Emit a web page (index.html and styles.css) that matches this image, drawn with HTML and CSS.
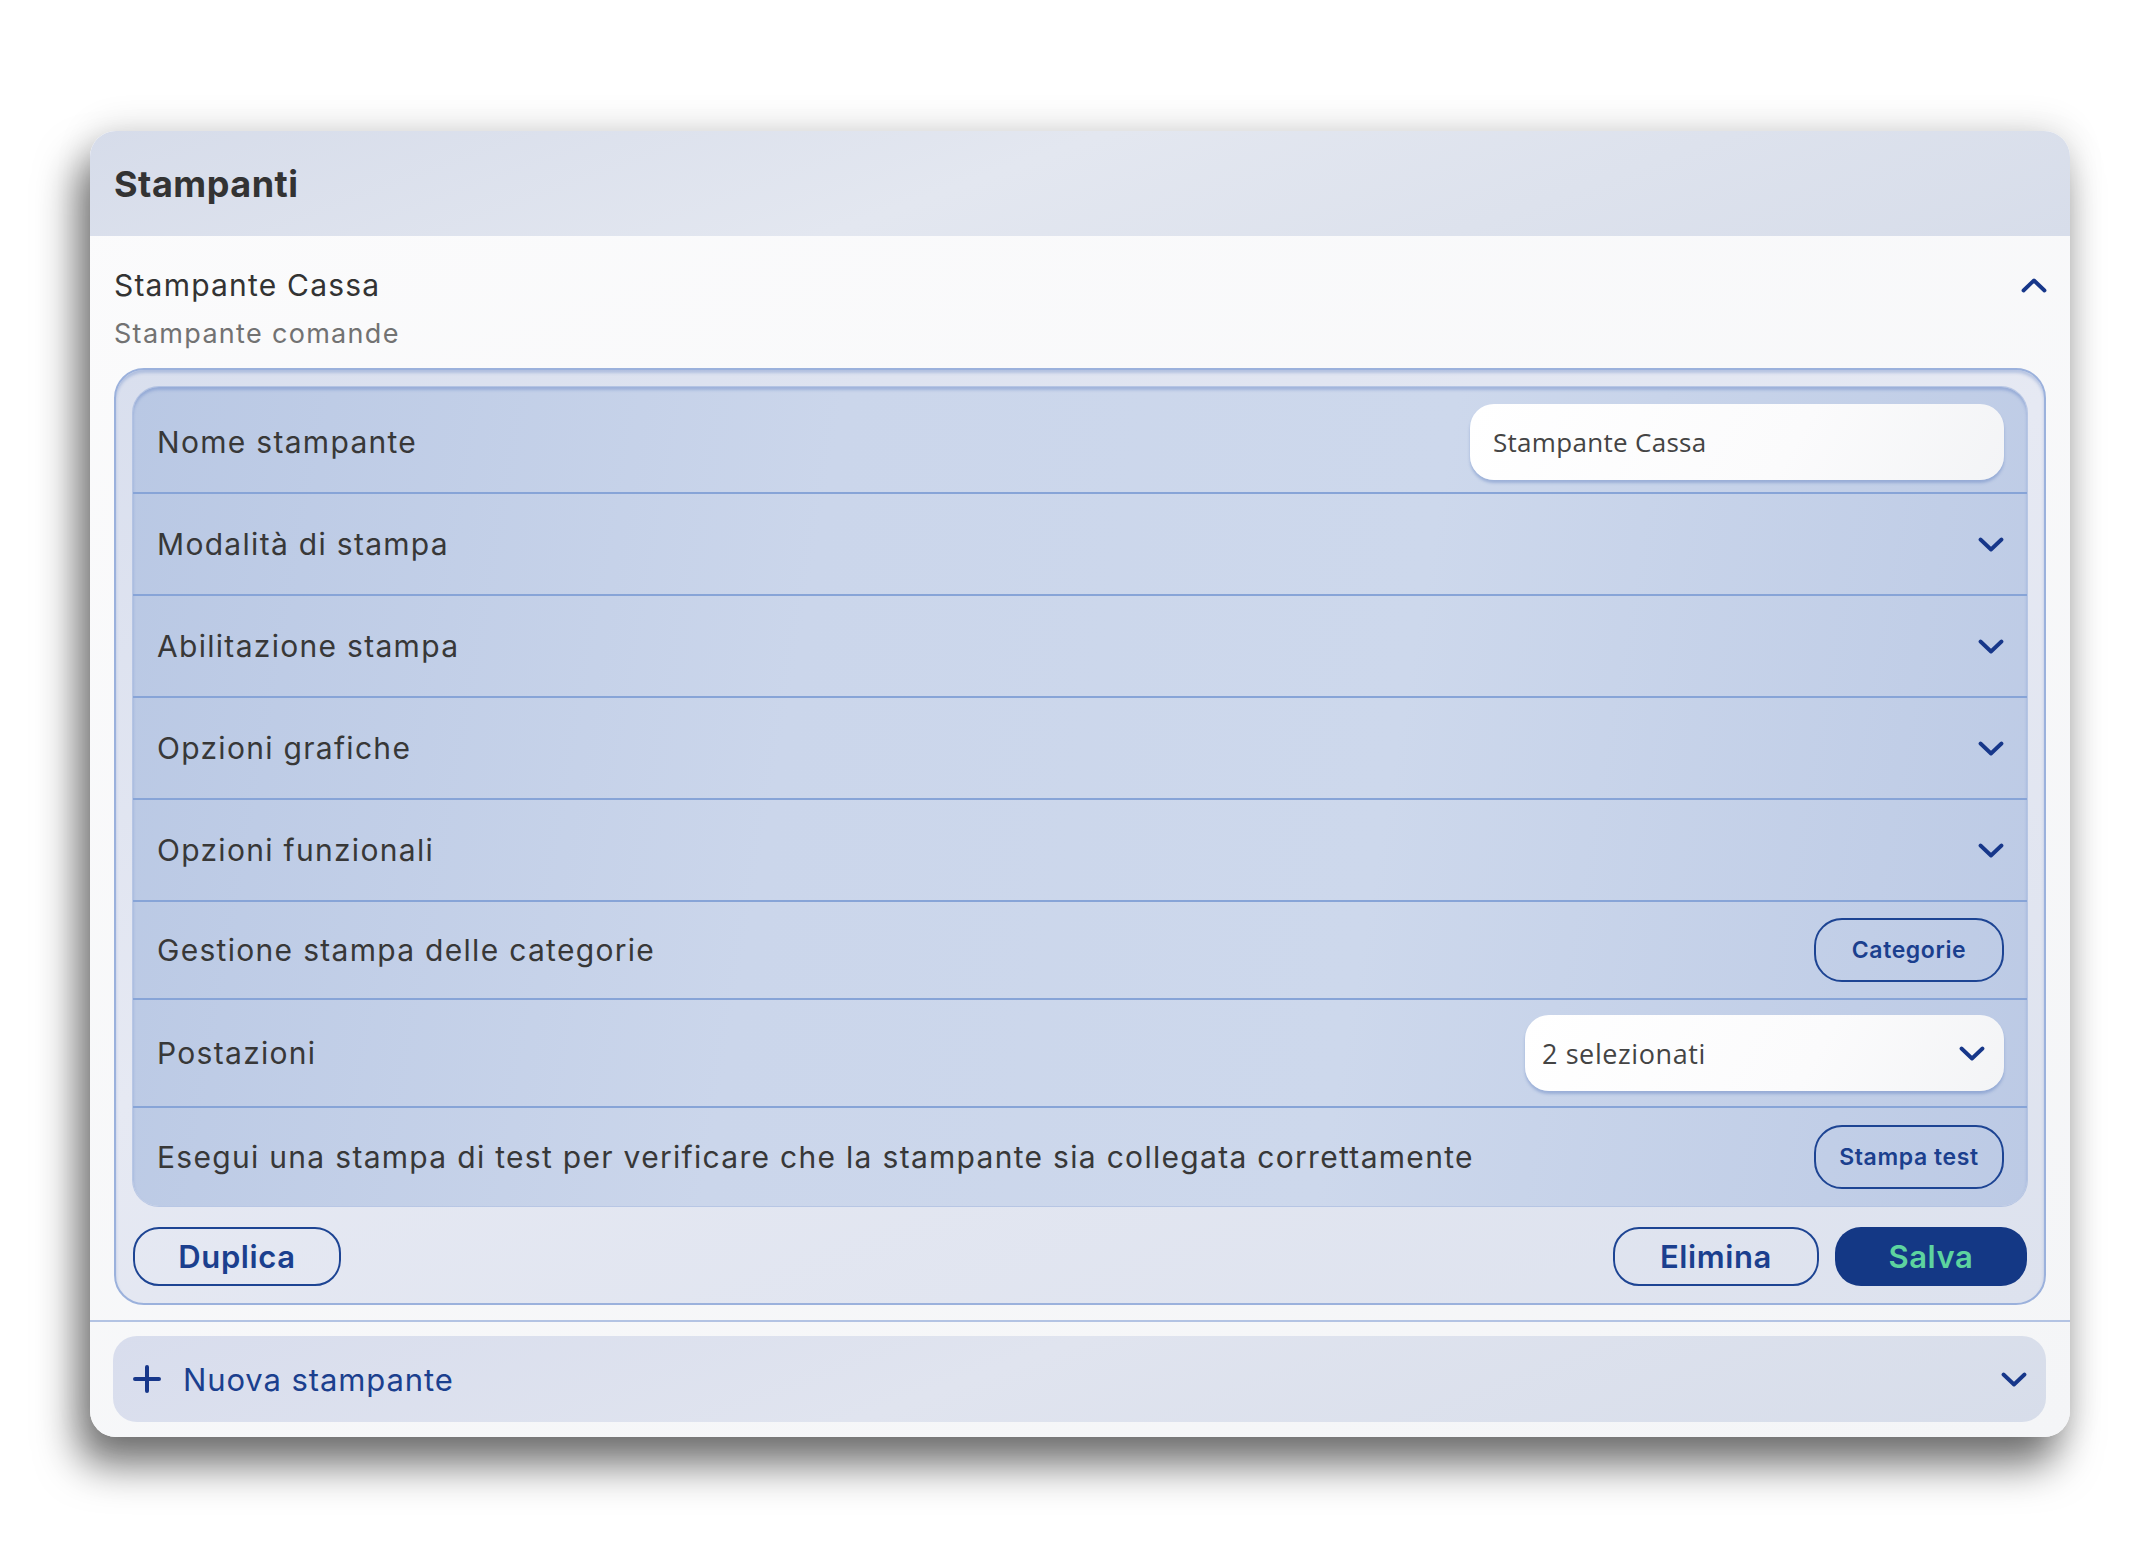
FILE: index.html
```html
<!DOCTYPE html>
<html lang="it">
<head>
<meta charset="utf-8">
<title>Stampanti</title>
<link rel="stylesheet" href="styles.css">
</head>
<body>
<div class="card">
  <div class="card-header"><h1 class="card-title">Stampanti</h1></div>
  <div class="printer">
    <div class="printer-head">
      <div class="printer-info">
        <div class="printer-name">Stampante Cassa</div>
        <div class="printer-type">Stampante comande</div>
      </div>
      <svg class="chev chev-up" width="26" height="15" viewBox="0 0 26 15"><path d="M2.5 12.5 L13 2.5 L23.5 12.5" /></svg>
    </div>
    <div class="panel">
      <div class="rows">
        <div class="row row-input">
          <span class="label">Nome stampante</span>
          <div class="field">Stampante Cassa</div>
        </div>
        <div class="row">
          <span class="label">Modalità di stampa</span>
          <svg class="chev" width="26" height="15" viewBox="0 0 26 15"><path d="M2.5 2.5 L13 12.5 L23.5 2.5" /></svg>
        </div>
        <div class="row">
          <span class="label">Abilitazione stampa</span>
          <svg class="chev" width="26" height="15" viewBox="0 0 26 15"><path d="M2.5 2.5 L13 12.5 L23.5 2.5" /></svg>
        </div>
        <div class="row">
          <span class="label">Opzioni grafiche</span>
          <svg class="chev" width="26" height="15" viewBox="0 0 26 15"><path d="M2.5 2.5 L13 12.5 L23.5 2.5" /></svg>
        </div>
        <div class="row">
          <span class="label">Opzioni funzionali</span>
          <svg class="chev" width="26" height="15" viewBox="0 0 26 15"><path d="M2.5 2.5 L13 12.5 L23.5 2.5" /></svg>
        </div>
        <div class="row row-btn">
          <span class="label">Gestione stampa delle categorie</span>
          <button class="btn-small">Categorie</button>
        </div>
        <div class="row row-select">
          <span class="label">Postazioni</span>
          <div class="field select">
            <span>2 selezionati</span>
            <svg class="chev" width="26" height="15" viewBox="0 0 26 15"><path d="M2.5 2.5 L13 12.5 L23.5 2.5" /></svg>
          </div>
        </div>
        <div class="row row-btn row-last">
          <span class="label">Esegui una stampa di test per verificare che la stampante sia collegata correttamente</span>
          <button class="btn-small">Stampa test</button>
        </div>
      </div>
      <div class="actions">
        <button class="btn btn-outline btn-dup">Duplica</button>
        <div class="actions-right">
          <button class="btn btn-outline btn-del">Elimina</button>
          <button class="btn btn-primary">Salva</button>
        </div>
      </div>
    </div>
  </div>
  <div class="add-section">
    <div class="add-panel">
      <svg class="plus" width="28" height="28" viewBox="0 0 28 28"><path d="M14 2 V26 M2 14 H26" /></svg>
      <span class="add-label">Nuova stampante</span>
      <svg class="chev chev-add" width="26" height="15" viewBox="0 0 26 15"><path d="M2.5 2.5 L13 12.5 L23.5 2.5" /></svg>
    </div>
  </div>
</div>
</body>
</html>
```

FILE: styles.css
```css
* { box-sizing: border-box; }

html, body {
  margin: 0;
  padding: 0;
  background: #ffffff;
}

body {
  min-height: 1554px;
  padding: 131px 0 0 90px;
  font-family: "Inter", "Liberation Sans", sans-serif;
  color: #363636;
}

.card {
  width: 1980px;
  border-radius: 26px;
  background: linear-gradient(160deg, #fbfbfc 0%, #f4f5f7 100%);
  box-shadow: -12px 28px 42px rgba(0, 0, 0, 0.55), 0 -4px 36px rgba(0, 0, 0, 0.12);
  overflow: hidden;
}

.card-header {
  height: 105px;
  display: flex;
  align-items: center;
  padding-left: 24px;
  background: linear-gradient(160deg, #d6dcea 0%, #e3e7f0 45%, #d7ddea 100%);
}

.card-title {
  margin: 0;
  font-size: 36px;
  font-weight: 700;
  letter-spacing: 0.5px;
  color: #333333;
}

.printer {
  padding: 30px 24px 15px 24px;
  border-bottom: 2px solid #b3c3e3;
}

.printer-head {
  display: flex;
  justify-content: space-between;
  align-items: flex-start;
}

.printer-name {
  font-size: 30px;
  line-height: 38px;
  letter-spacing: 1.2px;
  color: #333333;
}

.printer-type {
  margin-top: 13px;
  font-size: 27px;
  line-height: 34px;
  letter-spacing: 1.3px;
  color: #727272;
}

.chev {
  display: block;
  fill: none;
  stroke: #17378a;
  stroke-width: 3.8;
  stroke-linecap: round;
  stroke-linejoin: round;
  flex: none;
}

.chev-up {
  margin-top: 12px;
  margin-right: -1px;
}

.panel {
  margin-top: 17px;
  border: 2px solid #9bb1dc;
  border-radius: 30px;
  padding: 17px;
  background: linear-gradient(160deg, #d9dfee 0%, #e6e9f3 45%, #dde2ee 100%);
  box-shadow: inset 0 3px 3px rgba(80, 115, 190, 0.30);
}

.rows {
  border-radius: 26px;
  background: linear-gradient(100deg, #b9c8e4 0%, #cbd6eb 35%, #cdd8ec 65%, #bccae5 100%);
  box-shadow: inset 0 3px 3px rgba(80, 115, 190, 0.35), 0 0 0 1px rgba(140, 165, 215, 0.5);
}

.row {
  height: 102px;
  display: flex;
  align-items: center;
  justify-content: space-between;
  padding: 0 23px 0 24px;
  border-bottom: 2px solid #87a4d7;
}

.row-input { height: 107px; padding-top: 4px; }
.row-btn { height: 98px; }
.row-select { height: 108px; }
.row-last { border-bottom: none; }

.label {
  font-size: 30px;
  letter-spacing: 1.3px;
  color: #383838;
}

.field {
  height: 76px;
  border-radius: 24px;
  background: linear-gradient(120deg, #ffffff 0%, #fbfbfc 60%, #f3f4f6 100%);
  box-shadow: 0 3px 3px rgba(70, 105, 180, 0.35);
  font-family: "Open Sans", "Liberation Sans", sans-serif;
  font-size: 26px;
  letter-spacing: 0.3px;
  color: #444444;
  display: flex;
  align-items: center;
}

.row-input .field {
  width: 534px;
  padding-left: 23px;
}

.select {
  width: 479px;
  padding: 0 19px 0 17px;
  justify-content: space-between;
  font-size: 27px;
  letter-spacing: 0.6px;
}

.btn-small {
  width: 190px;
  height: 64px;
  border: 2px solid #1d4493;
  border-radius: 28px;
  background: transparent;
  font-family: "Inter", "Liberation Sans", sans-serif;
  font-size: 23px;
  font-weight: 600;
  letter-spacing: 0.6px;
  color: #1b3f8e;
  padding: 0;
}

.actions {
  margin-top: 21px;
  display: flex;
  justify-content: space-between;
  align-items: center;
}

.actions-right {
  display: flex;
  gap: 16px;
}

.btn {
  height: 59px;
  border-radius: 26px;
  font-family: "Inter", "Liberation Sans", sans-serif;
  font-size: 31px;
  font-weight: 600;
  letter-spacing: 0.6px;
  padding: 0;
}

.btn-outline {
  border: 2px solid #1d4493;
  background: transparent;
  color: #1b3f8e;
}

.btn-dup { width: 208px; }
.btn-del { width: 206px; }

.btn-primary {
  width: 192px;
  border: none;
  background: #143885;
  color: #5dd49f;
}

.add-section {
  padding: 14px 24px 15px 23px;
}

.add-panel {
  height: 86px;
  border-radius: 24px;
  background: linear-gradient(160deg, #d8dded 0%, #e0e4ef 45%, #d7ddea 100%);
  display: flex;
  align-items: center;
  padding: 0 19px 0 20px;
}

.plus {
  display: block;
  fill: none;
  stroke: #17378a;
  stroke-width: 4;
  stroke-linecap: round;
  flex: none;
}

.add-label {
  margin-left: 22px;
  font-size: 31px;
  letter-spacing: 0.9px;
  color: #1b3f8e;
  flex: 1;
}
```
